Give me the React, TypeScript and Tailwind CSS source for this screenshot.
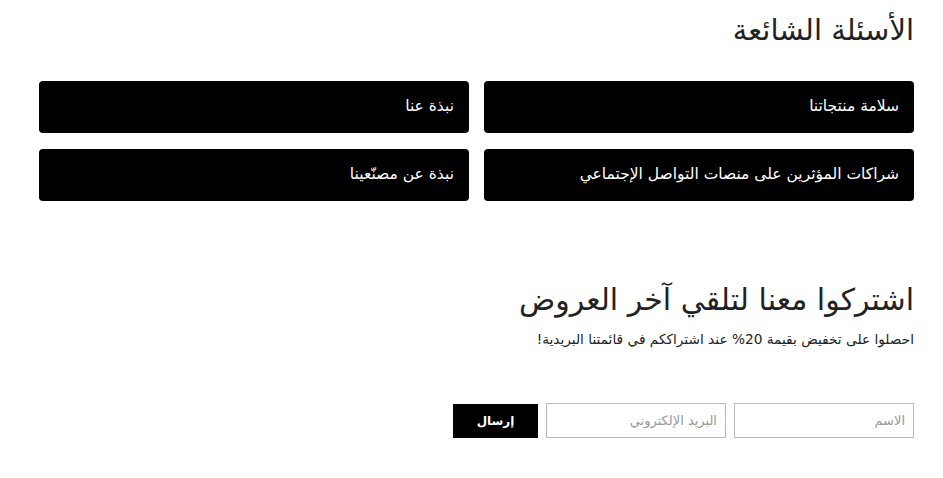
import React from "react";

export default function App() {
  const items = [
    "سلامة منتجاتنا",
    "نبذة عنا",
    "شراكات المؤثرين على منصات التواصل الإجتماعي",
    "نبذة عن مصنّعينا",
  ];
  return (
    <div dir="rtl" className="w-[943px] h-[478px] bg-white pr-[29px] pl-[39px] font-['DejaVu_Sans',sans-serif] text-[#222]">
      <h2 className="pt-[11px] text-[29px] leading-[38px] font-normal text-[#222]">الأسئلة الشائعة</h2>
      <div className="mt-[32px] grid grid-cols-2 gap-x-[15px] gap-y-[16px]">
        {items.map((t) => (
          <div key={t} className="h-[52px] bg-black rounded-[4px] flex items-center pr-[15px] text-white text-[15.5px] font-normal">
            {t}
          </div>
        ))}
      </div>
      <h2 className="mt-[79px] text-[30px] leading-[40px] font-normal text-[#222]">اشتركوا معنا لتلقي آخر العروض</h2>
      <p className="mt-[10px] text-[13.7px] leading-[18px] text-[#222]">احصلوا على تخفيض بقيمة 20% عند اشتراككم في قائمتنا البريدية!</p>
      <div className="mt-[55px] flex items-start gap-[8px]">
        <input placeholder="الاسم" className="w-[180px] h-[35px] border border-[#bbb] px-[8px] text-[13px] placeholder:text-[#999] outline-none" />
        <input placeholder="البريد الإلكتروني" className="w-[180px] h-[35px] border border-[#bbb] px-[8px] text-[13px] placeholder:text-[#999] outline-none" />
        <button className="mt-[1px] w-[85px] h-[34px] bg-black text-white text-[12px] font-bold">إرسال</button>
      </div>
    </div>
  );
}
